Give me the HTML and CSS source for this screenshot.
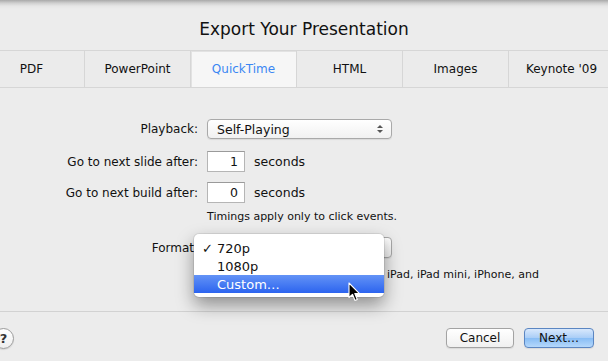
FILE: index.html
```html
<!DOCTYPE html>
<html lang="en">
<head>
    <meta charset="UTF-8">
    <title>Export Your Presentation</title>
    <link rel="stylesheet" href="styles.css">
</head>
<body>
    <div class="sheet">
        <!-- Title -->
        <header class="title">
            <h1>Export Your Presentation</h1>
        </header>

        <!-- Tabs -->
        <nav class="tabs">
            <div class="tab">PDF</div>
            <div class="tab">PowerPoint</div>
            <div class="tab selected">QuickTime</div>
            <div class="tab">HTML</div>
            <div class="tab">Images</div>
            <div class="tab">Keynote '09</div>
        </nav>

        <!-- Options -->
        <div class="form">
            <div class="row row-popup">
                <label class="label">Playback:</label>
                <div class="popup">
                    <span>Self-Playing</span>
                    <span class="arrows"><i class="up"></i><i class="down"></i></span>
                </div>
            </div>
            <div class="row row-field">
                <label class="label">Go to next slide after:</label>
                <div class="field">1</div>
                <span class="unit">seconds</span>
            </div>
            <div class="row row-field second">
                <label class="label">Go to next build after:</label>
                <div class="field">0</div>
                <span class="unit">seconds</span>
            </div>
            <p class="note">Timings apply only to click events.</p>

            <div class="row row-format">
                <label class="label label-format">Format</label>
                <div class="popup"></div>

                <!-- Open menu -->
                <div class="menu">
                    <div class="menu-item"><span class="check">✓</span>720p</div>
                    <div class="menu-item"><span class="check"></span>1080p</div>
                    <div class="menu-item active"><span class="check"></span>Custom…</div>
                    <svg class="cursor" width="13" height="20" viewBox="0 0 13 20">
                        <path d="M1 1 L1 15.5 L4.5 12.3 L7 18.5 L9.3 17.5 L6.8 11.6 L11.5 11.6 Z" fill="#000" stroke="#fff" stroke-width="1.1" stroke-linejoin="round"/>
                    </svg>
                </div>
            </div>
            <p class="note note-wide">iPad, iPad mini, iPhone, and</p>
        </div>

        <!-- Buttons -->
        <footer class="footer">
            <div class="help">?</div>
            <div class="buttons">
                <button class="btn">Cancel</button>
                <button class="btn btn-default">Next…</button>
            </div>
        </footer>
    </div>
</body>
</html>
```

FILE: styles.css
```css
/* Reset */
* {
    margin: 0;
    padding: 0;
    box-sizing: border-box;
}

body {
    font-family: "DejaVu Sans", "Liberation Sans", sans-serif;
    background-color: #ececec;
    color: #111;
    width: 608px;
    height: 361px;
    overflow: hidden;
}

.sheet {
    height: 361px;
    display: flex;
    flex-direction: column;
    background: linear-gradient(to bottom, #a9a9a9 0px, #cfcfcf 3px, #e6e6e6 6px, #ececec 9px);
}

/* Title */
.title {
    height: 50px;
    padding-top: 8px;
    display: flex;
    align-items: center;
    justify-content: center;
}

.title h1 {
    font-size: 17px;
    font-weight: normal;
    color: #111;
}

/* Tabs */
.tabs {
    display: flex;
    height: 38px;
    margin-left: -21px;
    border-top: 1px solid #d6d6d6;
    border-bottom: 1px solid #d6d6d6;
    background-color: #ebebeb;
}

.tab {
    flex: 0 0 106px;
    display: flex;
    align-items: center;
    justify-content: center;
    font-size: 12px;
    color: #111;
    border-right: 1px solid #d6d6d6;
}

.tab.selected {
    background-color: #f6f6f6;
    color: #3a86f3;
    box-shadow: inset 1px 1px 0 #e2e2e2;
}

/* Form */
.form {
    flex: 1;
    padding-top: 31px;
    font-size: 12px;
}

.row {
    display: flex;
    align-items: center;
}

.label {
    width: 199px;
    padding-right: 1px;
    text-align: right;
    margin-right: 8px;
}

.label-format {
    padding-right: 5px;
}

.row-popup {
    height: 20px;
    margin-bottom: 12px;
}

.row-field {
    height: 21px;
}

.row-field.second {
    margin-top: 10px;
}

.popup {
    width: 185px;
    height: 20px;
    padding: 0 8px 0 9px;
    display: flex;
    align-items: center;
    justify-content: space-between;
    border: 1px solid #a9a9a9;
    border-radius: 4px;
    background: linear-gradient(to bottom, #ffffff, #f1f1f1);
    box-shadow: 0 1px 1px rgba(0, 0, 0, 0.08);
    font-size: 12.5px;
}

.arrows {
    display: flex;
    flex-direction: column;
    gap: 2px;
}

.arrows i {
    width: 0;
    height: 0;
    border-left: 3px solid transparent;
    border-right: 3px solid transparent;
}

.arrows .up {
    border-bottom: 3px solid #555;
}

.arrows .down {
    border-top: 3px solid #555;
}

.field {
    width: 38px;
    height: 21px;
    padding-right: 6px;
    text-align: right;
    line-height: 20px;
    font-size: 12.5px;
    background-color: #fff;
    border: 1px solid #b5b5b5;
    border-top-color: #9a9a9a;
}

.unit {
    margin-left: 9px;
    font-size: 12.5px;
}

.note {
    margin-top: 7px;
    padding-left: 207px;
    font-size: 11px;
    line-height: 14px;
}

/* Format row with open menu */
.row-format {
    position: relative;
    height: 21px;
    margin-top: 13px;
}

.row-format .popup {
    height: 21px;
}

.note-wide {
    padding-left: 387px;
    margin-top: 8px;
    line-height: 17px;
}

.menu {
    position: absolute;
    left: 194px;
    top: -3px;
    width: 190px;
    padding: 5px 0 4px;
    background-color: #fff;
    border-radius: 5px;
    box-shadow: 0 0 0 1px rgba(0, 0, 0, 0.08), 0 8px 18px rgba(0, 0, 0, 0.4);
    z-index: 10;
}

.menu-item {
    height: 18px;
    display: flex;
    align-items: center;
    padding-left: 8px;
    font-size: 13px;
    color: #111;
}

.menu-item .check {
    width: 15px;
}

.menu-item.active {
    background: linear-gradient(to bottom, #6393f6, #2c64ef);
    color: #fff;
}

.cursor {
    position: absolute;
    left: 154px;
    top: 48px;
}

/* Footer */
.footer {
    height: 50px;
    border-top: 1px solid #d2d2d2;
    display: flex;
    justify-content: space-between;
    padding: 16px 14px 0 0;
}

.help {
    width: 21px;
    height: 21px;
    margin-left: -7px;
    border: 1px solid #9c9c9c;
    border-radius: 50%;
    background: linear-gradient(to bottom, #ffffff, #eeeeee);
    display: flex;
    align-items: center;
    justify-content: center;
    font-size: 13px;
    font-weight: bold;
    color: #333;
    box-shadow: 0 1px 1px rgba(0, 0, 0, 0.1);
}

.buttons {
    display: flex;
    gap: 10px;
}

.btn {
    width: 68px;
    height: 20px;
    font-family: inherit;
    font-size: 12px;
    color: #111;
    border: 1px solid #a3a3a3;
    border-radius: 4px;
    background: linear-gradient(to bottom, #ffffff, #f0f0f0);
    box-shadow: 0 1px 1px rgba(0, 0, 0, 0.08);
}

.btn-default {
    width: 70px;
    border-color: #5b86c2;
    background: linear-gradient(to bottom, #d8e8fc, #a9cdf7 50%, #88bdf5 51%, #b5d8fb);
}
```
